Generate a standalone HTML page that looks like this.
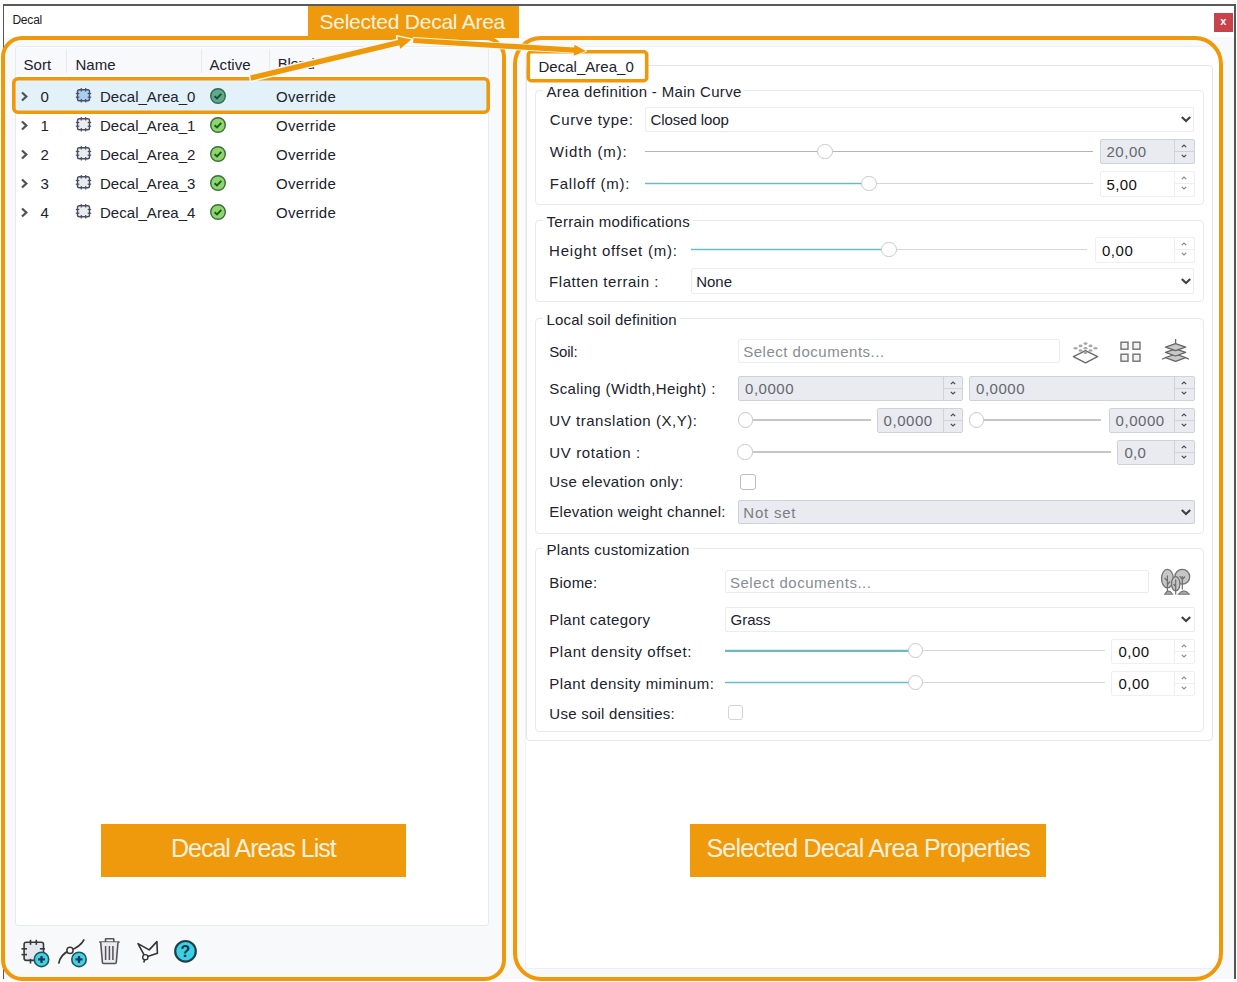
<!DOCTYPE html>
<html><head><meta charset="utf-8"><title>Decal</title>
<style>
html,body{margin:0;padding:0;width:1237px;height:982px;overflow:hidden;background:#fff}
.r{position:absolute;display:block}
.t{position:absolute;white-space:pre;line-height:1;font-family:"Liberation Sans", sans-serif}
</style></head><body>
<div class="r" style="left:0.0px;top:0.0px;width:1237.0px;height:982.0px;background:#ffffff"></div>
<div class="r" style="left:3.0px;top:37.0px;width:1232.0px;height:942.0px;background:#f8f9fb"></div>
<div class="r" style="left:3.0px;top:4.0px;width:1232.0px;height:33.0px;background:#ffffff"></div>
<div class="r" style="left:3.0px;top:4.0px;width:1233.0px;height:1.5px;background:#5a5a5a"></div>
<div class="r" style="left:3.0px;top:4.0px;width:1.3px;height:975.0px;background:#555"></div>
<div class="r" style="left:1234.2px;top:4.0px;width:1.6px;height:975.0px;background:#555"></div>
<div class="t" style="left:12.4px;top:14.4px;font-size:12px;color:#1a1a1a;letter-spacing:-0.2px;">Decal</div>
<div class="r" style="left:1214.0px;top:13.0px;width:19.0px;height:18.5px;background:#c8424b"></div>
<div class="t" style="left:1220.3px;top:16.2px;font-size:11px;color:#fff;letter-spacing:0px;font-weight:bold">x</div>
<div class="r" style="left:14.5px;top:46.0px;width:474.0px;height:880.0px;background:#ffffff;border:1px solid #e9eaee;border-radius:3px;box-sizing:border-box"></div>
<div class="r" style="left:15.5px;top:47.5px;width:472.0px;height:27.5px;background:#f8f9fb"></div>
<div class="r" style="left:66.0px;top:49.0px;width:1.0px;height:24.0px;background:#e8eaee"></div>
<div class="r" style="left:200.5px;top:49.0px;width:1.0px;height:24.0px;background:#e8eaee"></div>
<div class="r" style="left:268.5px;top:49.0px;width:1.0px;height:24.0px;background:#e8eaee"></div>
<div class="t" style="left:23.4px;top:56.8px;font-size:15px;color:#20222c;letter-spacing:0.13px;">Sort</div>
<div class="t" style="left:75.4px;top:56.8px;font-size:15px;color:#20222c;letter-spacing:0.1px;">Name</div>
<div class="t" style="left:209.6px;top:56.8px;font-size:15px;color:#20222c;letter-spacing:0.02px;">Active</div>
<div class="t" style="left:277.8px;top:55.6px;font-size:15px;color:#20222c;letter-spacing:-0.3px;">Blend</div>
<div class="r" style="left:15.5px;top:80.0px;width:472.0px;height:30.5px;background:#e3f2f9"></div>
<svg class="r" style="left:19px;top:91px;" width="10" height="11" viewBox="0 0 10 11"><path d="M3 1.5 L7.3 5.5 L3 9.5" fill="none" stroke="#505258" stroke-width="2.3"/></svg>
<div class="t" style="left:40.5px;top:89.0px;font-size:15px;color:#20222c;letter-spacing:0.3px;">0</div>
<svg class="r" style="left:74px;top:87px;" width="18" height="17" viewBox="0 0 18 17"><rect x="3.5" y="2.8" width="12" height="11" rx="1.8" fill="#a9cdf0" stroke="#475062" stroke-width="1.4"/><line x1="7.3" y1="1" x2="7.3" y2="4.6" stroke="#475062" stroke-width="1.2"/><line x1="7.3" y1="12" x2="7.3" y2="15.5" stroke="#475062" stroke-width="1.2"/><line x1="11.7" y1="1" x2="11.7" y2="4.6" stroke="#475062" stroke-width="1.2"/><line x1="11.7" y1="12" x2="11.7" y2="15.5" stroke="#475062" stroke-width="1.2"/><line x1="1.8" y1="6.5" x2="5.3" y2="6.5" stroke="#475062" stroke-width="1.2"/><line x1="13.7" y1="6.5" x2="17.2" y2="6.5" stroke="#475062" stroke-width="1.2"/><line x1="1.8" y1="10.2" x2="5.3" y2="10.2" stroke="#475062" stroke-width="1.2"/><line x1="13.7" y1="10.2" x2="17.2" y2="10.2" stroke="#475062" stroke-width="1.2"/></svg>
<div class="t" style="left:100.0px;top:89.0px;font-size:15px;color:#20222c;letter-spacing:0.03px;">Decal_Area_0</div>
<svg class="r" style="left:209px;top:87px;" width="18" height="18" viewBox="0 0 18 18"><circle cx="9" cy="9" r="7.3" fill="#5fa98a" stroke="#2f6b52" stroke-width="1.4"/><path d="M5.6 9.2 L8 11.4 L12.3 6.8" fill="none" stroke="#1a4a36" stroke-width="1.9"/></svg>
<div class="t" style="left:276.0px;top:89.0px;font-size:15px;color:#20222c;letter-spacing:0.34px;">Override</div>
<svg class="r" style="left:19px;top:120px;" width="10" height="11" viewBox="0 0 10 11"><path d="M3 1.5 L7.3 5.5 L3 9.5" fill="none" stroke="#505258" stroke-width="2.3"/></svg>
<div class="t" style="left:40.5px;top:118.0px;font-size:15px;color:#20222c;letter-spacing:0.3px;">1</div>
<svg class="r" style="left:74px;top:116px;" width="18" height="17" viewBox="0 0 18 17"><rect x="3.5" y="2.8" width="12" height="11" rx="1.8" fill="#e9ebef" stroke="#475062" stroke-width="1.4"/><line x1="7.3" y1="1" x2="7.3" y2="4.6" stroke="#475062" stroke-width="1.2"/><line x1="7.3" y1="12" x2="7.3" y2="15.5" stroke="#475062" stroke-width="1.2"/><line x1="11.7" y1="1" x2="11.7" y2="4.6" stroke="#475062" stroke-width="1.2"/><line x1="11.7" y1="12" x2="11.7" y2="15.5" stroke="#475062" stroke-width="1.2"/><line x1="1.8" y1="6.5" x2="5.3" y2="6.5" stroke="#475062" stroke-width="1.2"/><line x1="13.7" y1="6.5" x2="17.2" y2="6.5" stroke="#475062" stroke-width="1.2"/><line x1="1.8" y1="10.2" x2="5.3" y2="10.2" stroke="#475062" stroke-width="1.2"/><line x1="13.7" y1="10.2" x2="17.2" y2="10.2" stroke="#475062" stroke-width="1.2"/></svg>
<div class="t" style="left:100.0px;top:118.0px;font-size:15px;color:#20222c;letter-spacing:0.03px;">Decal_Area_1</div>
<svg class="r" style="left:209px;top:116px;" width="18" height="18" viewBox="0 0 18 18"><circle cx="9" cy="9" r="7.3" fill="#8fd56d" stroke="#3a6e3a" stroke-width="1.4"/><path d="M5.6 9.2 L8 11.4 L12.3 6.8" fill="none" stroke="#1b5a1f" stroke-width="1.9"/></svg>
<div class="t" style="left:276.0px;top:118.0px;font-size:15px;color:#20222c;letter-spacing:0.34px;">Override</div>
<svg class="r" style="left:19px;top:149px;" width="10" height="11" viewBox="0 0 10 11"><path d="M3 1.5 L7.3 5.5 L3 9.5" fill="none" stroke="#505258" stroke-width="2.3"/></svg>
<div class="t" style="left:40.5px;top:147.0px;font-size:15px;color:#20222c;letter-spacing:0.3px;">2</div>
<svg class="r" style="left:74px;top:145px;" width="18" height="17" viewBox="0 0 18 17"><rect x="3.5" y="2.8" width="12" height="11" rx="1.8" fill="#e9ebef" stroke="#475062" stroke-width="1.4"/><line x1="7.3" y1="1" x2="7.3" y2="4.6" stroke="#475062" stroke-width="1.2"/><line x1="7.3" y1="12" x2="7.3" y2="15.5" stroke="#475062" stroke-width="1.2"/><line x1="11.7" y1="1" x2="11.7" y2="4.6" stroke="#475062" stroke-width="1.2"/><line x1="11.7" y1="12" x2="11.7" y2="15.5" stroke="#475062" stroke-width="1.2"/><line x1="1.8" y1="6.5" x2="5.3" y2="6.5" stroke="#475062" stroke-width="1.2"/><line x1="13.7" y1="6.5" x2="17.2" y2="6.5" stroke="#475062" stroke-width="1.2"/><line x1="1.8" y1="10.2" x2="5.3" y2="10.2" stroke="#475062" stroke-width="1.2"/><line x1="13.7" y1="10.2" x2="17.2" y2="10.2" stroke="#475062" stroke-width="1.2"/></svg>
<div class="t" style="left:100.0px;top:147.0px;font-size:15px;color:#20222c;letter-spacing:0.03px;">Decal_Area_2</div>
<svg class="r" style="left:209px;top:145px;" width="18" height="18" viewBox="0 0 18 18"><circle cx="9" cy="9" r="7.3" fill="#8fd56d" stroke="#3a6e3a" stroke-width="1.4"/><path d="M5.6 9.2 L8 11.4 L12.3 6.8" fill="none" stroke="#1b5a1f" stroke-width="1.9"/></svg>
<div class="t" style="left:276.0px;top:147.0px;font-size:15px;color:#20222c;letter-spacing:0.34px;">Override</div>
<svg class="r" style="left:19px;top:178px;" width="10" height="11" viewBox="0 0 10 11"><path d="M3 1.5 L7.3 5.5 L3 9.5" fill="none" stroke="#505258" stroke-width="2.3"/></svg>
<div class="t" style="left:40.5px;top:176.0px;font-size:15px;color:#20222c;letter-spacing:0.3px;">3</div>
<svg class="r" style="left:74px;top:174px;" width="18" height="17" viewBox="0 0 18 17"><rect x="3.5" y="2.8" width="12" height="11" rx="1.8" fill="#e9ebef" stroke="#475062" stroke-width="1.4"/><line x1="7.3" y1="1" x2="7.3" y2="4.6" stroke="#475062" stroke-width="1.2"/><line x1="7.3" y1="12" x2="7.3" y2="15.5" stroke="#475062" stroke-width="1.2"/><line x1="11.7" y1="1" x2="11.7" y2="4.6" stroke="#475062" stroke-width="1.2"/><line x1="11.7" y1="12" x2="11.7" y2="15.5" stroke="#475062" stroke-width="1.2"/><line x1="1.8" y1="6.5" x2="5.3" y2="6.5" stroke="#475062" stroke-width="1.2"/><line x1="13.7" y1="6.5" x2="17.2" y2="6.5" stroke="#475062" stroke-width="1.2"/><line x1="1.8" y1="10.2" x2="5.3" y2="10.2" stroke="#475062" stroke-width="1.2"/><line x1="13.7" y1="10.2" x2="17.2" y2="10.2" stroke="#475062" stroke-width="1.2"/></svg>
<div class="t" style="left:100.0px;top:176.0px;font-size:15px;color:#20222c;letter-spacing:0.03px;">Decal_Area_3</div>
<svg class="r" style="left:209px;top:174px;" width="18" height="18" viewBox="0 0 18 18"><circle cx="9" cy="9" r="7.3" fill="#8fd56d" stroke="#3a6e3a" stroke-width="1.4"/><path d="M5.6 9.2 L8 11.4 L12.3 6.8" fill="none" stroke="#1b5a1f" stroke-width="1.9"/></svg>
<div class="t" style="left:276.0px;top:176.0px;font-size:15px;color:#20222c;letter-spacing:0.34px;">Override</div>
<svg class="r" style="left:19px;top:207px;" width="10" height="11" viewBox="0 0 10 11"><path d="M3 1.5 L7.3 5.5 L3 9.5" fill="none" stroke="#505258" stroke-width="2.3"/></svg>
<div class="t" style="left:40.5px;top:205.0px;font-size:15px;color:#20222c;letter-spacing:0.3px;">4</div>
<svg class="r" style="left:74px;top:203px;" width="18" height="17" viewBox="0 0 18 17"><rect x="3.5" y="2.8" width="12" height="11" rx="1.8" fill="#e9ebef" stroke="#475062" stroke-width="1.4"/><line x1="7.3" y1="1" x2="7.3" y2="4.6" stroke="#475062" stroke-width="1.2"/><line x1="7.3" y1="12" x2="7.3" y2="15.5" stroke="#475062" stroke-width="1.2"/><line x1="11.7" y1="1" x2="11.7" y2="4.6" stroke="#475062" stroke-width="1.2"/><line x1="11.7" y1="12" x2="11.7" y2="15.5" stroke="#475062" stroke-width="1.2"/><line x1="1.8" y1="6.5" x2="5.3" y2="6.5" stroke="#475062" stroke-width="1.2"/><line x1="13.7" y1="6.5" x2="17.2" y2="6.5" stroke="#475062" stroke-width="1.2"/><line x1="1.8" y1="10.2" x2="5.3" y2="10.2" stroke="#475062" stroke-width="1.2"/><line x1="13.7" y1="10.2" x2="17.2" y2="10.2" stroke="#475062" stroke-width="1.2"/></svg>
<div class="t" style="left:100.0px;top:205.0px;font-size:15px;color:#20222c;letter-spacing:0.03px;">Decal_Area_4</div>
<svg class="r" style="left:209px;top:203px;" width="18" height="18" viewBox="0 0 18 18"><circle cx="9" cy="9" r="7.3" fill="#8fd56d" stroke="#3a6e3a" stroke-width="1.4"/><path d="M5.6 9.2 L8 11.4 L12.3 6.8" fill="none" stroke="#1b5a1f" stroke-width="1.9"/></svg>
<div class="t" style="left:276.0px;top:205.0px;font-size:15px;color:#20222c;letter-spacing:0.34px;">Override</div>
<svg class="r" style="left:18px;top:934px;" width="180" height="34" viewBox="0 0 180 34">
<g stroke="#383838" stroke-width="1.6" fill="none">
 <rect x="6.1" y="8.3" width="19.4" height="18.1" rx="2.2" fill="#e4e7ee"/>
 <line x1="12.5" y1="5.8" x2="12.5" y2="10.8"/><line x1="18.3" y1="5.8" x2="18.3" y2="10.8"/>
 <line x1="3.5" y1="14.8" x2="9" y2="14.8"/><line x1="3.5" y1="20.6" x2="9" y2="20.6"/>
 <line x1="21.9" y1="14.8" x2="27" y2="14.8"/><line x1="12.5" y1="24.8" x2="12.5" y2="29.6"/>
</g>
<circle cx="23.5" cy="25.4" r="7.2" fill="#46d0e0" stroke="#1a5560" stroke-width="1.6"/>
<path d="M23.5 21.9 V28.9 M20 25.4 H27" stroke="#163a5a" stroke-width="2.3"/>
<path d="M40.7 29.6 C42 23 46.5 18.5 52 16.4 C58 14.5 63 11.5 66.2 5.4" fill="none" stroke="#383838" stroke-width="1.7"/>
<circle cx="52" cy="16.4" r="3.1" fill="#fff" stroke="#383838" stroke-width="1.5"/>
<circle cx="61" cy="25.4" r="7.2" fill="#46d0e0" stroke="#1a5560" stroke-width="1.6"/>
<path d="M61 21.9 V28.9 M57.5 25.4 H64.5" stroke="#163a5a" stroke-width="2.3"/>
<g fill="none" stroke="#555" stroke-width="1.6" stroke-linejoin="round">
 <path d="M81.2 8.1 H101.6"/><path d="M87.5 8 V5.2 Q87.5 4.7 88.2 4.7 H95.1 Q95.8 4.7 95.8 5.2 V8"/>
 <path d="M82.7 8.3 L84.4 28.3 Q84.6 29.5 86 29.5 H96.8 Q98.1 29.5 98.3 28.3 L100 8.3" fill="#ecebf2"/>
 <path d="M87.6 12 V26 M91.4 12 V26 M94.9 12 V26" stroke-width="1.5"/>
</g>
<path d="M120 9.6 L131.2 15.9 L138.9 7.6 L139.4 19.3 L127.3 23.2 Z M127.3 23.2 L125.8 28.5" fill="none" stroke="#333" stroke-width="1.6" stroke-linejoin="round"/>
<circle cx="127.3" cy="23.2" r="2.6" fill="#fff" stroke="#333" stroke-width="1.4"/>
<circle cx="167.5" cy="17.3" r="10.3" fill="#3dcfe2" stroke="#1d4050" stroke-width="2.2"/>
<text x="167.5" y="23.3" text-anchor="middle" font-family="Liberation Sans" font-weight="bold" font-size="16" fill="#17324a">?</text>
</svg>
<svg class="r" style="left:0px;top:0px;" width="1237" height="982" viewBox="0 0 1237 982"><g fill="none" stroke="#EE980A">
<rect x="3" y="38" width="501" height="941" rx="19" stroke-width="4"/>
<rect x="13.8" y="78.8" width="474.4" height="33.4" rx="4" stroke-width="3.6"/>
</g></svg>
<div class="r" style="left:101.0px;top:824.0px;width:305.0px;height:53.0px;background:#EF9A0C"></div>
<div class="t" style="left:171.0px;top:836.3px;font-size:25px;color:#fdf1dc;letter-spacing:-1.0px;">Decal Areas List</div>
<div class="r" style="left:517.0px;top:46.0px;width:8.0px;height:923.0px;background:#fbfbfc"></div>
<div class="r" style="left:525.0px;top:46.0px;width:694.0px;height:923.0px;background:#ffffff;border-left:1px solid #f0f1f4;border-top:1px solid #eef0f3;border-bottom:1px solid #eceef1;box-sizing:border-box"></div>
<div class="r" style="left:525.5px;top:65.0px;width:687.5px;height:675.5px;border:1px solid #e6e7ea;border-radius:4px;box-sizing:border-box"></div>
<div class="r" style="left:534.5px;top:90.0px;width:669.0px;height:115.0px;border:1px solid #e8e9ec;border-radius:4px;box-sizing:border-box"></div>
<div class="r" style="left:543.0px;top:87.0px;width:200.0px;height:7.0px;background:#ffffff"></div>
<div class="t" style="left:546.5px;top:83.9px;font-size:15px;color:#20222c;letter-spacing:0.33px;">Area definition - Main Curve</div>
<div class="t" style="left:549.8px;top:112.3px;font-size:15px;color:#20222c;letter-spacing:0.63px;">Curve type:</div>
<div class="r" style="left:645.0px;top:107.0px;width:549.0px;height:25.0px;background:#ffffff;border:1px solid #ebecef;border-radius:2px;box-sizing:border-box"></div>
<div class="t" style="left:650.5px;top:112.0px;font-size:15px;color:#20222c;letter-spacing:-0.08px;">Closed loop</div>
<svg class="r" style="left:1180px;top:115px;" width="12" height="8" viewBox="0 0 12 8"><path d="M1.8 2 L6 6 L10.2 2" fill="none" stroke="#404040" stroke-width="2.1"/></svg>
<div class="t" style="left:549.8px;top:144.3px;font-size:15px;color:#20222c;letter-spacing:0.86px;">Width (m):</div>
<div class="r" style="left:645.0px;top:150.8px;width:448.0px;height:1.6px;background:#b4b4b4"></div>
<div class="r" style="left:817.4px;top:144.0px;width:15.2px;height:15.2px;background:#fff;border:1.4px solid #c9c9c9;border-radius:50%;box-sizing:border-box"></div>
<div class="r" style="left:1099.5px;top:139.0px;width:95.0px;height:25.0px;background:#e9ebf0;border:1px solid #cfd2d8;border-radius:2px;box-sizing:border-box"></div>
<div class="r" style="left:1174.0px;top:140.0px;width:1.0px;height:23.0px;background:#cfd2d8"></div>
<div class="r" style="left:1174.5px;top:151.0px;width:19.0px;height:1.0px;background:#cfd2d8"></div>
<svg class="r" style="left:1180px;top:142px;" width="8" height="18" viewBox="0 0 8 18"><path d="M1.8 5.2 L4 3 L6.2 5.2 M1.8 12.8 L4 15 L6.2 12.8" fill="none" stroke="#4a4a4a" stroke-width="1.2"/></svg>
<div class="t" style="left:1106.5px;top:144.3px;font-size:15px;color:#64676e;letter-spacing:0.53px;">20,00</div>
<div class="t" style="left:549.8px;top:176.3px;font-size:15px;color:#20222c;letter-spacing:0.75px;">Falloff (m):</div>
<div class="r" style="left:645.0px;top:181.8px;width:224.0px;height:3.0px;background:#d2f4f4"></div>
<div class="r" style="left:645.0px;top:182.7px;width:224.0px;height:1.5px;background:#72b8b8"></div>
<div class="r" style="left:869.0px;top:182.5px;width:224.0px;height:1.6px;background:#d6d6d6"></div>
<div class="r" style="left:861.4px;top:175.7px;width:15.2px;height:15.2px;background:#fff;border:1.4px solid #c9c9c9;border-radius:50%;box-sizing:border-box"></div>
<div class="r" style="left:1099.5px;top:171.0px;width:95.0px;height:25.5px;background:#ffffff;border:1px solid #eeeff2;border-radius:2px;box-sizing:border-box"></div>
<div class="r" style="left:1174.0px;top:172.0px;width:1.0px;height:23.5px;background:#eeeff2"></div>
<div class="r" style="left:1174.5px;top:183.2px;width:19.0px;height:1.0px;background:#eeeff2"></div>
<svg class="r" style="left:1180px;top:174px;" width="8" height="18" viewBox="0 0 8 18"><path d="M1.8 5.2 L4 3 L6.2 5.2 M1.8 12.8 L4 15 L6.2 12.8" fill="none" stroke="#8a8a8a" stroke-width="1.2"/></svg>
<div class="t" style="left:1106.5px;top:176.6px;font-size:15px;color:#111;letter-spacing:0.37px;">5,00</div>
<div class="r" style="left:534.5px;top:220.0px;width:669.0px;height:82.0px;border:1px solid #e8e9ec;border-radius:4px;box-sizing:border-box"></div>
<div class="r" style="left:543.0px;top:217.0px;width:150.0px;height:7.0px;background:#ffffff"></div>
<div class="t" style="left:546.5px;top:213.5px;font-size:15px;color:#20222c;letter-spacing:0.28px;">Terrain modifications</div>
<div class="t" style="left:549.1px;top:242.7px;font-size:15px;color:#20222c;letter-spacing:0.77px;">Height offset (m):</div>
<div class="r" style="left:690.7px;top:248.0px;width:198.3px;height:3.0px;background:#d2f4f4"></div>
<div class="r" style="left:690.7px;top:248.9px;width:198.3px;height:1.5px;background:#72b8b8"></div>
<div class="r" style="left:889.0px;top:248.7px;width:198.0px;height:1.6px;background:#d6d6d6"></div>
<div class="r" style="left:881.4px;top:241.9px;width:15.2px;height:15.2px;background:#fff;border:1.4px solid #c9c9c9;border-radius:50%;box-sizing:border-box"></div>
<div class="r" style="left:1095.0px;top:237.0px;width:99.5px;height:25.5px;background:#ffffff;border:1px solid #eeeff2;border-radius:2px;box-sizing:border-box"></div>
<div class="r" style="left:1174.0px;top:238.0px;width:1.0px;height:23.5px;background:#eeeff2"></div>
<div class="r" style="left:1174.5px;top:249.2px;width:19.0px;height:1.0px;background:#eeeff2"></div>
<svg class="r" style="left:1180px;top:240px;" width="8" height="18" viewBox="0 0 8 18"><path d="M1.8 5.2 L4 3 L6.2 5.2 M1.8 12.8 L4 15 L6.2 12.8" fill="none" stroke="#8a8a8a" stroke-width="1.2"/></svg>
<div class="t" style="left:1102.0px;top:242.6px;font-size:15px;color:#111;letter-spacing:0.53px;">0,00</div>
<div class="t" style="left:549.1px;top:274.0px;font-size:15px;color:#20222c;letter-spacing:0.53px;">Flatten terrain :</div>
<div class="r" style="left:690.7px;top:268.0px;width:503.8px;height:26.0px;background:#ffffff;border:1px solid #ebecef;border-radius:2px;box-sizing:border-box"></div>
<div class="t" style="left:696.2px;top:273.5px;font-size:15px;color:#20222c;letter-spacing:0.0px;">None</div>
<svg class="r" style="left:1180px;top:277px;" width="12" height="8" viewBox="0 0 12 8"><path d="M1.8 2 L6 6 L10.2 2" fill="none" stroke="#404040" stroke-width="2.1"/></svg>
<div class="r" style="left:534.5px;top:317.5px;width:669.0px;height:216.0px;border:1px solid #e8e9ec;border-radius:4px;box-sizing:border-box"></div>
<div class="r" style="left:543.0px;top:314.5px;width:137.0px;height:7.0px;background:#ffffff"></div>
<div class="t" style="left:546.5px;top:311.6px;font-size:15px;color:#20222c;letter-spacing:0.17px;">Local soil definition</div>
<div class="t" style="left:549.3px;top:344.0px;font-size:15px;color:#20222c;letter-spacing:-0.22px;">Soil:</div>
<div class="r" style="left:738.0px;top:339.0px;width:321.5px;height:23.5px;background:#fff;border:1px solid #ebecef;border-radius:2px;box-sizing:border-box"></div>
<div class="t" style="left:743.2px;top:344.0px;font-size:15px;color:#8a8c92;letter-spacing:0.51px;">Select documents...</div>
<div class="t" style="left:549.3px;top:381.3px;font-size:15px;color:#20222c;letter-spacing:0.37px;">Scaling (Width,Height) :</div>
<div class="r" style="left:738.0px;top:375.5px;width:225.0px;height:25.5px;background:#e9ebf0;border:1px solid #cfd2d8;border-radius:2px;box-sizing:border-box"></div>
<div class="r" style="left:942.5px;top:376.5px;width:1.0px;height:23.5px;background:#cfd2d8"></div>
<div class="r" style="left:943.0px;top:387.8px;width:19.0px;height:1.0px;background:#cfd2d8"></div>
<svg class="r" style="left:949px;top:379px;" width="8" height="18" viewBox="0 0 8 18"><path d="M1.8 5.2 L4 3 L6.2 5.2 M1.8 12.8 L4 15 L6.2 12.8" fill="none" stroke="#4a4a4a" stroke-width="1.2"/></svg>
<div class="t" style="left:745.0px;top:381.1px;font-size:15px;color:#64676e;letter-spacing:0.54px;">0,0000</div>
<div class="r" style="left:969.0px;top:375.5px;width:225.7px;height:25.5px;background:#e9ebf0;border:1px solid #cfd2d8;border-radius:2px;box-sizing:border-box"></div>
<div class="r" style="left:1174.2px;top:376.5px;width:1.0px;height:23.5px;background:#cfd2d8"></div>
<div class="r" style="left:1174.7px;top:387.8px;width:19.0px;height:1.0px;background:#cfd2d8"></div>
<svg class="r" style="left:1180px;top:379px;" width="8" height="18" viewBox="0 0 8 18"><path d="M1.8 5.2 L4 3 L6.2 5.2 M1.8 12.8 L4 15 L6.2 12.8" fill="none" stroke="#4a4a4a" stroke-width="1.2"/></svg>
<div class="t" style="left:976.0px;top:381.1px;font-size:15px;color:#64676e;letter-spacing:0.54px;">0,0000</div>
<div class="t" style="left:549.3px;top:413.3px;font-size:15px;color:#20222c;letter-spacing:0.55px;">UV translation (X,Y):</div>
<div class="r" style="left:738.0px;top:419.2px;width:132.6px;height:1.6px;background:#c6c6c6"></div>
<div class="r" style="left:737.7px;top:412.4px;width:15.2px;height:15.2px;background:#fff;border:1.4px solid #c9c9c9;border-radius:50%;box-sizing:border-box"></div>
<div class="r" style="left:876.6px;top:408.0px;width:86.4px;height:25.0px;background:#e9ebf0;border:1px solid #cfd2d8;border-radius:2px;box-sizing:border-box"></div>
<div class="r" style="left:942.5px;top:409.0px;width:1.0px;height:23.0px;background:#cfd2d8"></div>
<div class="r" style="left:943.0px;top:420.0px;width:19.0px;height:1.0px;background:#cfd2d8"></div>
<svg class="r" style="left:949px;top:411px;" width="8" height="18" viewBox="0 0 8 18"><path d="M1.8 5.2 L4 3 L6.2 5.2 M1.8 12.8 L4 15 L6.2 12.8" fill="none" stroke="#4a4a4a" stroke-width="1.2"/></svg>
<div class="t" style="left:883.6px;top:413.3px;font-size:15px;color:#64676e;letter-spacing:0.54px;">0,0000</div>
<div class="r" style="left:969.0px;top:419.2px;width:132.4px;height:1.6px;background:#c6c6c6"></div>
<div class="r" style="left:969.0px;top:412.4px;width:15.2px;height:15.2px;background:#fff;border:1.4px solid #c9c9c9;border-radius:50%;box-sizing:border-box"></div>
<div class="r" style="left:1108.6px;top:408.0px;width:86.1px;height:25.0px;background:#e9ebf0;border:1px solid #cfd2d8;border-radius:2px;box-sizing:border-box"></div>
<div class="r" style="left:1174.2px;top:409.0px;width:1.0px;height:23.0px;background:#cfd2d8"></div>
<div class="r" style="left:1174.7px;top:420.0px;width:19.0px;height:1.0px;background:#cfd2d8"></div>
<svg class="r" style="left:1180px;top:411px;" width="8" height="18" viewBox="0 0 8 18"><path d="M1.8 5.2 L4 3 L6.2 5.2 M1.8 12.8 L4 15 L6.2 12.8" fill="none" stroke="#4a4a4a" stroke-width="1.2"/></svg>
<div class="t" style="left:1115.6px;top:413.3px;font-size:15px;color:#64676e;letter-spacing:0.54px;">0,0000</div>
<div class="t" style="left:549.3px;top:445.0px;font-size:15px;color:#20222c;letter-spacing:0.62px;">UV rotation :</div>
<div class="r" style="left:738.0px;top:451.2px;width:373.0px;height:1.6px;background:#c6c6c6"></div>
<div class="r" style="left:737.4px;top:444.4px;width:15.2px;height:15.2px;background:#fff;border:1.4px solid #c9c9c9;border-radius:50%;box-sizing:border-box"></div>
<div class="r" style="left:1117.4px;top:440.0px;width:77.3px;height:24.5px;background:#e9ebf0;border:1px solid #cfd2d8;border-radius:2px;box-sizing:border-box"></div>
<div class="r" style="left:1174.2px;top:441.0px;width:1.0px;height:22.5px;background:#cfd2d8"></div>
<div class="r" style="left:1174.7px;top:451.8px;width:19.0px;height:1.0px;background:#cfd2d8"></div>
<svg class="r" style="left:1180px;top:443px;" width="8" height="18" viewBox="0 0 8 18"><path d="M1.8 5.2 L4 3 L6.2 5.2 M1.8 12.8 L4 15 L6.2 12.8" fill="none" stroke="#4a4a4a" stroke-width="1.2"/></svg>
<div class="t" style="left:1124.4px;top:445.1px;font-size:15px;color:#64676e;letter-spacing:0.3px;">0,0</div>
<div class="t" style="left:549.3px;top:474.3px;font-size:15px;color:#20222c;letter-spacing:0.39px;">Use elevation only:</div>
<div class="r" style="left:740.0px;top:474.0px;width:15.5px;height:15.5px;background:#fff;border:1px solid #b9bcc2;border-radius:3px;box-sizing:border-box"></div>
<div class="t" style="left:549.3px;top:503.9px;font-size:15px;color:#20222c;letter-spacing:0.25px;">Elevation weight channel:</div>
<div class="r" style="left:737.8px;top:499.6px;width:456.8px;height:24.9px;background:#e9ebf0;border:1px solid #cfd2d8;border-radius:2px;box-sizing:border-box"></div>
<div class="t" style="left:743.3px;top:504.6px;font-size:15px;color:#7a7d85;letter-spacing:0.78px;">Not set</div>
<svg class="r" style="left:1180px;top:508px;" width="12" height="8" viewBox="0 0 12 8"><path d="M1.8 2 L6 6 L10.2 2" fill="none" stroke="#404040" stroke-width="2.1"/></svg>
<svg class="r" style="left:1070px;top:338px;" width="120" height="28" viewBox="0 0 120 28">
<path d="M3.4 18.6 L15.5 12.6 L27.6 18.6 L15.5 24.9 Z" fill="none" stroke="#6a6a6a" stroke-width="1.4" stroke-linejoin="round"/>
<g fill="#a8a8a8">
 <ellipse cx="15.5" cy="5.6" rx="2" ry="1.3"/><ellipse cx="10.5" cy="7.9" rx="2" ry="1.3"/><ellipse cx="20.5" cy="7.9" rx="2" ry="1.3"/>
 <ellipse cx="5.5" cy="10.2" rx="2" ry="1.3"/><ellipse cx="15.5" cy="10.2" rx="2" ry="1.3"/><ellipse cx="25.5" cy="10.2" rx="2" ry="1.3"/>
 <ellipse cx="10.5" cy="12.5" rx="2" ry="1.3"/><ellipse cx="20.5" cy="12.5" rx="2" ry="1.3"/><ellipse cx="15.5" cy="14.8" rx="2" ry="1.3"/>
</g>
<g fill="#f2f2f2" stroke="#727272" stroke-width="1.4">
 <rect x="51" y="4.2" width="7" height="7"/><rect x="63" y="4.2" width="7" height="7"/>
 <rect x="51" y="16.2" width="7" height="7"/><rect x="63" y="16.2" width="7" height="7"/>
</g>
<g stroke="#666" stroke-width="1.3" fill="#c9c9c9" stroke-linejoin="round">
 <path d="M92.5 21 L95.5 19.6 L105.6 16 L115.7 19.6 L118.5 21 L115.7 19.6 L105.6 23.4 L95.5 19.6 Z"/>
 <path d="M95.5 14.4 L105.6 10.8 L115.7 14.4 L105.6 18 Z"/>
 <path d="M95.5 9.1 L105.6 5.6 L115.7 9.1 L105.6 12.6 Z"/>
 <line x1="105.6" y1="1" x2="105.6" y2="5.6"/>
</g>
</svg>
<div class="r" style="left:534.5px;top:548.0px;width:669.0px;height:183.5px;border:1px solid #e8e9ec;border-radius:4px;box-sizing:border-box"></div>
<div class="r" style="left:543.0px;top:545.0px;width:150.0px;height:7.0px;background:#ffffff"></div>
<div class="t" style="left:546.5px;top:541.7px;font-size:15px;color:#20222c;letter-spacing:0.28px;">Plants customization</div>
<div class="t" style="left:549.3px;top:575.0px;font-size:15px;color:#20222c;letter-spacing:0.22px;">Biome:</div>
<div class="r" style="left:725.3px;top:570.3px;width:424.2px;height:23.2px;background:#fff;border:1px solid #ebecef;border-radius:2px;box-sizing:border-box"></div>
<div class="t" style="left:730.0px;top:575.3px;font-size:15px;color:#8a8c92;letter-spacing:0.51px;">Select documents...</div>
<div class="t" style="left:549.3px;top:611.9px;font-size:15px;color:#20222c;letter-spacing:0.37px;">Plant category</div>
<div class="r" style="left:725.0px;top:607.0px;width:469.7px;height:24.5px;background:#ffffff;border:1px solid #ebecef;border-radius:2px;box-sizing:border-box"></div>
<div class="t" style="left:730.5px;top:611.8px;font-size:15px;color:#20222c;letter-spacing:0.0px;">Grass</div>
<svg class="r" style="left:1180px;top:615px;" width="12" height="8" viewBox="0 0 12 8"><path d="M1.8 2 L6 6 L10.2 2" fill="none" stroke="#404040" stroke-width="2.1"/></svg>
<div class="t" style="left:549.3px;top:643.6px;font-size:15px;color:#20222c;letter-spacing:0.57px;">Plant density offset:</div>
<div class="r" style="left:725.3px;top:649.2px;width:189.9px;height:3.0px;background:#d2f4f4"></div>
<div class="r" style="left:725.3px;top:650.1px;width:189.9px;height:1.5px;background:#72b8b8"></div>
<div class="r" style="left:915.2px;top:649.9px;width:190.2px;height:1.6px;background:#d6d6d6"></div>
<div class="r" style="left:907.6px;top:643.1px;width:15.2px;height:15.2px;background:#fff;border:1.4px solid #c9c9c9;border-radius:50%;box-sizing:border-box"></div>
<div class="r" style="left:1111.4px;top:639.0px;width:83.3px;height:24.5px;background:#ffffff;border:1px solid #eeeff2;border-radius:2px;box-sizing:border-box"></div>
<div class="r" style="left:1174.2px;top:640.0px;width:1.0px;height:22.5px;background:#eeeff2"></div>
<div class="r" style="left:1174.7px;top:650.8px;width:19.0px;height:1.0px;background:#eeeff2"></div>
<svg class="r" style="left:1180px;top:642px;" width="8" height="18" viewBox="0 0 8 18"><path d="M1.8 5.2 L4 3 L6.2 5.2 M1.8 12.8 L4 15 L6.2 12.8" fill="none" stroke="#8a8a8a" stroke-width="1.2"/></svg>
<div class="t" style="left:1118.4px;top:644.1px;font-size:15px;color:#111;letter-spacing:0.53px;">0,00</div>
<div class="t" style="left:549.3px;top:675.5px;font-size:15px;color:#20222c;letter-spacing:0.45px;">Plant density miminum:</div>
<div class="r" style="left:725.3px;top:680.8px;width:189.9px;height:3.0px;background:#d2f4f4"></div>
<div class="r" style="left:725.3px;top:681.7px;width:189.9px;height:1.5px;background:#72b8b8"></div>
<div class="r" style="left:915.2px;top:681.5px;width:190.2px;height:1.6px;background:#d6d6d6"></div>
<div class="r" style="left:907.6px;top:674.7px;width:15.2px;height:15.2px;background:#fff;border:1.4px solid #c9c9c9;border-radius:50%;box-sizing:border-box"></div>
<div class="r" style="left:1111.4px;top:670.5px;width:83.3px;height:25.0px;background:#ffffff;border:1px solid #eeeff2;border-radius:2px;box-sizing:border-box"></div>
<div class="r" style="left:1174.2px;top:671.5px;width:1.0px;height:23.0px;background:#eeeff2"></div>
<div class="r" style="left:1174.7px;top:682.5px;width:19.0px;height:1.0px;background:#eeeff2"></div>
<svg class="r" style="left:1180px;top:674px;" width="8" height="18" viewBox="0 0 8 18"><path d="M1.8 5.2 L4 3 L6.2 5.2 M1.8 12.8 L4 15 L6.2 12.8" fill="none" stroke="#8a8a8a" stroke-width="1.2"/></svg>
<div class="t" style="left:1118.4px;top:675.8px;font-size:15px;color:#111;letter-spacing:0.53px;">0,00</div>
<div class="t" style="left:549.3px;top:705.6px;font-size:15px;color:#20222c;letter-spacing:0.25px;">Use soil densities:</div>
<div class="r" style="left:727.6px;top:704.5px;width:15.5px;height:15.5px;background:#fff;border:1px solid #d2d4d8;border-radius:3px;box-sizing:border-box"></div>
<svg class="r" style="left:1160px;top:567px;" width="32" height="30" viewBox="0 0 32 30">
<g fill="#c6c6c6" stroke="#737373" stroke-width="1.3">
 <ellipse cx="7.4" cy="11.6" rx="5.9" ry="9.3"/>
 <circle cx="22.3" cy="9.8" r="7.4"/>
 <ellipse cx="15.7" cy="16.8" rx="4.2" ry="7.1"/>
</g>
<g stroke="#6e6e6e" stroke-width="1.2" fill="none">
 <path d="M7.4 8.5 V27 M4.6 11 L7.4 14 M7.4 17.5 L10 14.5"/>
 <path d="M22.3 9 V22.5 M19.6 9 L22.3 12.5 L25 9.5"/>
 <path d="M15.7 12.5 V27.5 M13.5 17 L15.7 19.5"/>
</g>
<path d="M4.6 27.3 Q8.6 21 12.6 27.3 Z M18.3 27.3 Q23.8 20.5 29.4 27.3 Z" fill="#a9a9a9" stroke="#777" stroke-width="1.1"/>
</svg>
<svg class="r" style="left:0px;top:0px;" width="1237" height="982" viewBox="0 0 1237 982"><g fill="none" stroke="#EE980A">
<rect x="515" y="38" width="706" height="941" rx="26" stroke-width="4"/>
</g></svg>
<div class="r" style="left:530.0px;top:55.0px;width:115.0px;height:24.0px;background:#ffffff"></div>
<div class="t" style="left:538.4px;top:58.8px;font-size:15px;color:#20222c;letter-spacing:0.03px;">Decal_Area_0</div>
<svg class="r" style="left:0px;top:0px;" width="1237" height="982" viewBox="0 0 1237 982"><rect x="528.3" y="51.8" width="118.4" height="28.9" rx="3" fill="none" stroke="#EE980A" stroke-width="3.6"/></svg>
<div class="r" style="left:690.0px;top:824.0px;width:356.0px;height:53.0px;background:#EF9A0C"></div>
<div class="t" style="left:706.5px;top:836.0px;font-size:25px;color:#fdf1dc;letter-spacing:-0.8px;">Selected Decal Area Properties</div>
<div class="r" style="left:308.0px;top:5.6px;width:210.5px;height:32.7px;background:#EF9A0C"></div>
<div class="t" style="left:319.5px;top:11.0px;font-size:21px;color:#fdf3e0;letter-spacing:-0.25px;">Selected Decal Area</div>
<svg class="r" style="left:0;top:0" width="1237" height="982">
<g fill="#fbfaf4" stroke="#fbfaf4" stroke-width="3" stroke-linejoin="round">
 <path d="M251.3 80.7 L399.4 45.3 L400.2 48.7 L411.4 39.6 L397.3 36.6 L398.1 40.0 L250.1 75.5 Z"/>
</g>
<g fill="#fffdf2" stroke="#fffdf2" stroke-width="1.6" stroke-linejoin="round">
 <path d="M413.1 43.1 L573.9 52.8 L573.7 55.7 L586.0 50.9 L574.4 44.7 L574.2 47.6 L413.5 37.9 Z"/>
</g>
<g fill="#EE980A" stroke="none">
 <path d="M251.3 80.7 L399.4 45.3 L400.2 48.7 L411.4 39.6 L397.3 36.6 L398.1 40.0 L250.1 75.5 Z"/>
 <path d="M413.1 43.1 L573.9 52.8 L573.7 55.7 L586.0 50.9 L574.4 44.7 L574.2 47.6 L413.5 37.9 Z"/>
</g>
</svg>
</body></html>
